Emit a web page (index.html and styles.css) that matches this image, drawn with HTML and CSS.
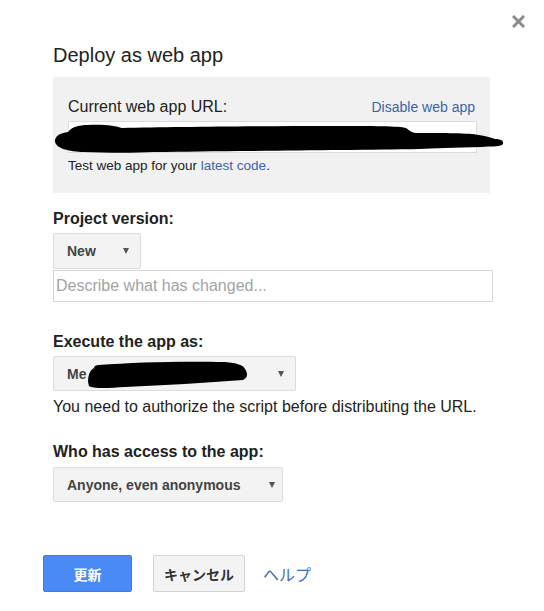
FILE: index.html
```html
<!DOCTYPE html>
<html lang="en">
<head>
    <meta charset="UTF-8">
    <meta name="viewport" content="width=device-width, initial-scale=1.0">
    <title>Deploy as web app</title>
    <link rel="stylesheet" href="styles.css">
</head>
<body>
    <div class="dialog">
        <button class="close" type="button" aria-label="Close">
            <svg width="13" height="13" viewBox="0 0 13 13">
                <path d="M2 2 L11 11 M11 2 L2 11" stroke="#8c8c8c" stroke-width="3" stroke-linecap="square"/>
            </svg>
        </button>

        <h1 class="title">Deploy as web app</h1>

        <div class="current">
            <div class="current-head">
                <span class="current-label">Current web app URL:</span>
                <a class="link disable" href="#">Disable web app</a>
            </div>
            <div class="url-field">
                <div class="url-input"></div>
                <!-- redaction scribble over the url -->
                <svg class="redact redact-url" width="452" height="30" viewBox="0 0 452 30">
                    <path d="M1,17 C1,12 6,9 14,8 C18,3 24,1 34,1 C50,0 62,2 68,4 C120,3 200,2 280,2 C320,2 345,2 352,4 C356,7 358,9 364,9 C390,9 415,9 425,11 C433,12 437,14 441,15 C448,15 451,18 448,21 C444,23 436,22 428,23 C400,24 380,24 365,25 C320,26 260,26 200,27 C160,27 130,28 100,28 C80,29 55,29 30,28 C15,28 1,24 1,17 Z" fill="#000"/>
                </svg>
            </div>
            <p class="test-line">Test web app for your <a class="link" href="#">latest code</a>.</p>
        </div>

        <section class="field field-version">
            <h2 class="field-label">Project version:</h2>
            <div class="select select-version"><span>New</span><span class="caret"></span></div>
            <input class="text-input" type="text" placeholder="Describe what has changed...">
        </section>

        <section class="field field-execute">
            <h2 class="field-label">Execute the app as:</h2>
            <div class="select select-execute">
                <span>Me</span><span class="caret"></span>
                <svg class="redact redact-me" width="168" height="30" viewBox="0 0 168 30">
                    <path d="M3,22 C3,15 5,10 9,8 C9,6 11,5 14,5 C50,2 100,1 140,2 C152,3 158,5 160,9 C163,13 163,18 158,20 C120,23 80,25 40,27 C25,28 8,29 4,26 Z" fill="#000"/>
                </svg>
            </div>
            <p class="hint">You need to authorize the script before distributing the URL.</p>
        </section>

        <section class="field field-access">
            <h2 class="field-label">Who has access to the app:</h2>
            <div class="select select-access"><span>Anyone, even anonymous</span><span class="caret"></span></div>
        </section>

        <div class="actions">
            <button class="btn btn-primary" type="button">更新</button>
            <button class="btn btn-cancel" type="button">キャンセル</button>
            <a class="help" href="#">ヘルプ</a>
        </div>
    </div>
</body>
</html>
```

FILE: styles.css
```css
* {
    box-sizing: border-box;
}

body {
    margin: 0;
    background: #fff;
    color: #222;
    font-family: "Liberation Sans", Arial, sans-serif;
}

.dialog {
    position: relative;
    padding: 43px 0 0 53px;
}

.close {
    position: absolute;
    top: 15px;
    right: 19px;
    padding: 0;
    border: 0;
    background: none;
    line-height: 0;
}

.title {
    margin: 0 0 10px;
    font-size: 20px;
    font-weight: normal;
    line-height: 24px;
}

.link {
    color: #3a62b0;
    text-decoration: none;
}

/* grey box with the current url */
.current {
    width: 437px;
    padding: 20px 13px 19px 15px;
    background: #f1f1f1;
}

.current-head {
    display: flex;
    justify-content: space-between;
    align-items: baseline;
}

.current-label {
    font-size: 16px;
    line-height: 19px;
}

.disable {
    padding-right: 2px;
    font-size: 14px;
}

.url-field {
    position: relative;
    margin-top: 5px;
}

.url-input {
    height: 32px;
    border: 1px solid #dadada;
    background: #fff;
}

.redact {
    position: absolute;
}

.redact-url {
    top: 3px;
    left: -14px;
}

.test-line {
    margin: 5px 0 0;
    font-size: 13.5px;
    line-height: 16px;
}

/* form fields */
.field-version {
    margin-top: 16px;
}

.field-execute {
    margin-top: 30px;
}

.field-access {
    margin-top: 26px;
}

.field-label {
    margin: 0 0 5px;
    font-size: 16px;
    font-weight: bold;
    line-height: 19px;
}

.select {
    position: relative;
    display: flex;
    align-items: center;
    justify-content: space-between;
    height: 35px;
    padding: 0 10px 0 13px;
    border: 1px solid #dcdcdc;
    border-radius: 2px;
    background: #f3f3f3;
    color: #444;
    font-size: 14px;
    font-weight: bold;
}

.select-version {
    width: 88px;
    height: 36px;
    padding-right: 11px;
}

.select-execute {
    width: 243px;
    padding-right: 11px;
}

.select-access {
    width: 230px;
    margin-top: 6px;
    padding-right: 7px;
}

.caret {
    width: 0;
    height: 0;
    border-left: 3.5px solid transparent;
    border-right: 3.5px solid transparent;
    border-top: 6px solid #555;
}

.redact-me {
    top: 3px;
    left: 31px;
}

.text-input {
    display: block;
    width: 440px;
    height: 32px;
    margin-top: 1px;
    padding: 0 2px;
    border: 1px solid #d6d6d6;
    font-family: inherit;
    font-size: 16px;
    color: #222;
    outline: none;
}

.text-input::placeholder {
    color: #a3a3a3;
}

.hint {
    margin: 6px 0 0;
    font-size: 16px;
    line-height: 19px;
}

/* bottom buttons */
.actions {
    display: flex;
    align-items: center;
    margin: 53px 0 0 -10px;
}

.btn {
    min-width: 89px;
    height: 37px;
    margin-right: 21px;
    padding: 0 10px;
    border: 1px solid #d4d4d4;
    border-radius: 2px;
    background: #f3f3f3;
    color: #333;
    font-family: "Liberation Sans", "Noto Sans CJK JP", sans-serif;
    font-size: 14px;
    font-weight: bold;
}

.btn-cancel {
    margin-right: 18px;
}

.btn-primary {
    border-color: #3b7be4;
    background: #4a8af4;
    color: #fff;
}

.help {
    color: #3f6cc4;
    font-family: "Noto Sans CJK JP", sans-serif;
    font-size: 16px;
    text-decoration: none;
}
```
